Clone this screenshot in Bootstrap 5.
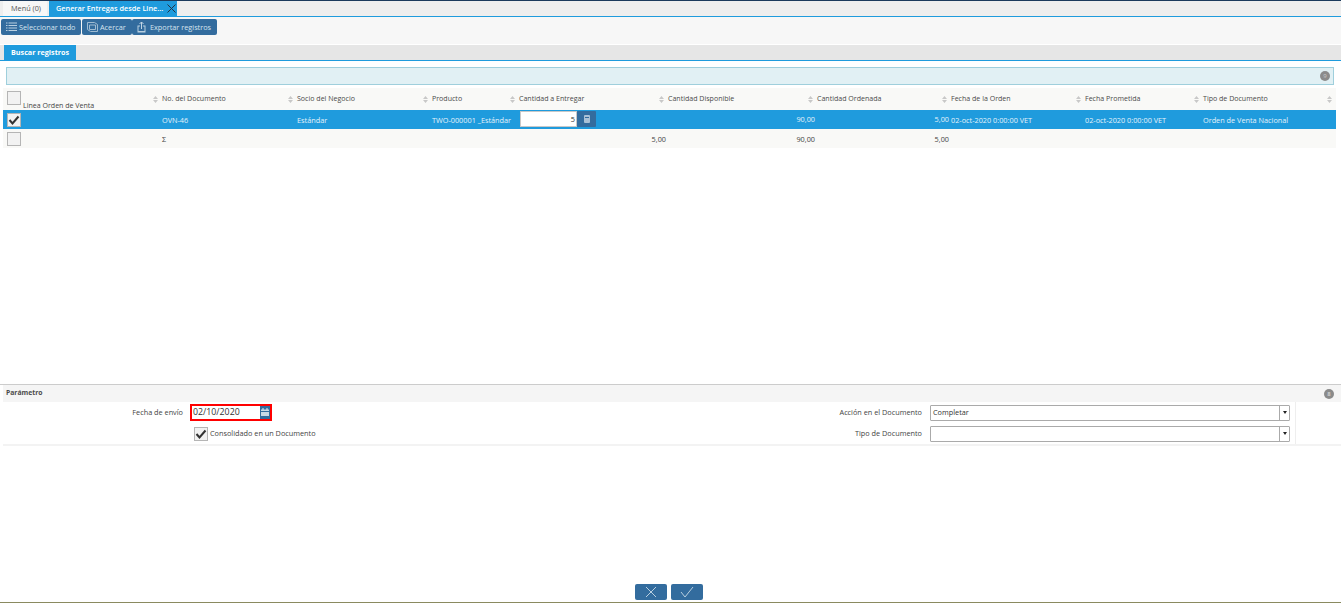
<!DOCTYPE html>
<html lang="es">
<head>
<meta charset="UTF-8">
<title>Generar Entregas desde Linea</title>
<link href="https://cdn.jsdelivr.net/npm/bootstrap@5.3.0/dist/css/bootstrap.min.css" rel="stylesheet">
<style>
    html, body { height: 100%; overflow: hidden; }
    body { background: #fff; font-family: "Open Sans", "Noto Sans", sans-serif; font-size: 7.3px; color: #444; line-height: 1.2; }
    .page-wrap { height: 603px; border-top: 1px solid #1b3a5c; }

    .tab-bar { height: 15px; background: #eee; padding-left: 3px; gap: 2px; }
    .tab-item { width: 44px; height: 15px; padding: 0 0 0 8px; background: #f7f7f7; color: #555; white-space: nowrap; }
    .tab-item.on { background: #1f9bdd; color: #fff; font-weight: 600; width: 128px; padding: 0 0 0 7px; justify-content: space-between; }
    .blue-line { height: 1px; flex: none; background: #1f9bdd; }

    .tool-bar { height: 27px; background: #f7f7f7; padding: 2px 0 0 1px; align-items: flex-start; }
    .tool-btn { height: 16px; background: #336c9e; color: #d6e4ef; border: 0; border-radius: 2px; padding: 0 0 0 5px; font-size: 7.3px; gap: 2px; white-space: nowrap; }
    .tool-btn.first { width: 80px; margin-right: 1px; }
    .tool-btn.second { width: 50px; gap: 2px; }
    .tool-btn.third { width: 85px; gap: 4px; }

    .sub-tabs { height: 15px; background: #e6e6e6; padding-left: 4px; margin-top: 1px; }
    .sub-tab { width: 72px; height: 15px; background: #1f9bdd; color: #fff; font-weight: 700; font-size: 7.2px; padding-left: 7px; white-space: nowrap; }

    .search-bar { height: 18px; margin: 6px 7px 3px 6px; background: #e1f0f4; border: 1px solid #9fcfdc; padding-right: 3px; }
    .gray-dot { width: 10px; height: 10px; border-radius: 50%; background: #8b8b8b; color: #ccc; font-size: 6px; line-height: 10px; text-align: center; }

    .grid-area { margin: 0 5px 0 3px; background: #f9f9f7; }
    .head-row { display: grid; grid-template-columns: 150px 135px 135px 87px 149px 149px 134px 134px 118px 1fr; height: 22px; font-size: 7.05px; }
    .body-row { display: grid; grid-template-columns: 159px 135px 135px 87px 149px 149px 134px 134px 118px 1fr; height: 19px; align-items: center; }
    .head-cell { padding-top: 6px; gap: 4px; white-space: nowrap; color: #4a4a4a; }
    .sort-mark { width: 5px; flex: none; margin-top: 2px; }
    .line-head { padding: 3px 0 0 4px; gap: 2px; white-space: nowrap; }
    .line-head span:last-child { margin-top: 10px; }
    .box-check { width: 14px; height: 14px; background: #f2f2f2; border: 1px solid #b5b5b5; display: block; flex: none; }
    .box-check svg { display: block; }
    .body-row.picked { background: #1f9bdd; color: #e4f2fb; }
    .first-cell { padding-left: 4px; }
    .num-cell { text-align: right; padding-right: 2px; padding-top: 1px; }
    .num-cell.raised { padding-top: 0; margin-top: -1px; }
    .plain-cell { white-space: nowrap; padding-top: 1px; }

    .qty-input { width: 57px; height: 16px; background: #fff; border: 1px solid #c8c8c8; text-align: right; padding-right: 1px; color: #333; line-height: 14px; margin: -2px 0 0 1px; }
    .qty-btn { width: 19px; height: 16px; background: #336c9e; border-radius: 1px; margin-top: -2px; }

    .param-wrap { border-top: 1px solid #ccc; margin-top: 236px; flex: none; }
    .param-head { height: 17px; background: #f5f5f5; margin-left: 3px; padding: 0 7px 0 3px; font-weight: 700; font-size: 6.8px; color: #4a4a4a; }
    .param-form { height: 44px; margin-left: 3px; border-bottom: 2px solid #f3f3f3; }
    .left-part { width: 790px; }
    .right-part { width: 503px; border-right: 1px solid #eee; }
    .param-line { height: 21px; }
    .param-label { white-space: nowrap; text-align: right; color: #444; }
    .left-part .param-label { width: 180px; }
    .right-part .param-label { width: 129px; }
    .date-box { width: 82px; height: 17px; border: 2px solid #f00; margin-left: 7px; padding-left: 1px; font-size: 8.8px; color: #333; line-height: 13px; background: #fff; }
    .cal-btn { width: 10px; height: 13px; background: #336c9e; }
    .combo-box { width: 360px; height: 16px; border: 1px solid #aaa; border-radius: 1px; margin-left: 8px; background: #fff; padding-left: 2px; color: #333; }
    .combo-arrow { width: 10px; height: 14px; border-left: 1px solid #aaa; }
    .combo-arrow i { display: block; border: 2.5px solid transparent; border-top: 3px solid #222; border-bottom: 0; }
    .consol-line { padding-left: 191px; gap: 2px; }

    .foot-btns { height: 16px; margin-top: 138px; padding-right: 4px; gap: 4px; flex: none; }
    .foot-btn { width: 32px; height: 16px; background: #336c9e; border: 0; border-radius: 2px; padding: 0; }
    .foot-line { height: 1px; background: #8a8a60; margin-top: 2px; flex: none; }
</style>
</head>
<body>
<div class="page-wrap d-flex flex-column">

    <div class="tab-bar d-flex">
        <div class="tab-item d-flex align-items-center">Menú (0)</div>
        <div class="tab-item on d-flex align-items-center">
            <span>Generar Entregas desde Line...</span>
            <svg width="11" height="11" viewBox="0 0 11 11"><path d="M1.500 1.500l8 8M9.500 1.500l-8 8" stroke="#234" stroke-width="1" fill="none"/></svg>
        </div>
    </div>
    <div class="blue-line"></div>

    <div class="tool-bar d-flex">
        <button class="tool-btn first d-flex align-items-center">
            <svg width="11" height="10" viewBox="0 0 11 10"><path d="M0 1h1.500M0 3.500h1.500M0 6h1.500M0 8.500h1.500M2.500 1H11M2.500 3.500H11M2.500 6H11M2.500 8.500H11" stroke="#b9cfe0" fill="none"/></svg>
            Seleccionar todo
        </button>
        <button class="tool-btn second d-flex align-items-center">
            <svg width="11" height="10" viewBox="0 0 11 10"><path d="M.5.500h7l3 2v7h-7l-3-2zM2.500 3h6v4.500h-6z" stroke="#9fbbd2" fill="none"/></svg>
            Acercar
        </button>
        <button class="tool-btn third d-flex align-items-center">
            <svg width="9" height="12" viewBox="0 0 9 12"><path d="M4.500 8V1M2.500 3l2-2 2 2" stroke="#c3d6e5" fill="none"/><path d="M.5 4.500h2.500v1H1.500v4.500h6V5.500H6v-1h2.500v7h-8z" fill="#b9cfe0"/></svg>
            Exportar registros
        </button>
    </div>

    <div class="sub-tabs d-flex">
        <div class="sub-tab d-flex align-items-center">Buscar registros</div>
    </div>
    <div class="blue-line"></div>

    <div class="search-bar d-flex align-items-center justify-content-end">
        <div class="gray-dot">9</div>
    </div>

    <div class="grid-area">
        <div class="head-row">
            <div class="line-head d-flex">
                <span class="box-check"></span>
                <span>Linea Orden de Venta</span>
            </div>
            <div class="head-cell d-flex"><svg class="sort-mark" height="7" viewBox="0 0 5 7"><path d="M2.500 0l2.500 3H0zM2.500 7L0 4h5z" fill="#c8c8c8"/></svg>No. del Documento</div>
            <div class="head-cell d-flex"><svg class="sort-mark" height="7" viewBox="0 0 5 7"><path d="M2.500 0l2.500 3H0zM2.500 7L0 4h5z" fill="#c8c8c8"/></svg>Socio del Negocio</div>
            <div class="head-cell d-flex"><svg class="sort-mark" height="7" viewBox="0 0 5 7"><path d="M2.500 0l2.500 3H0zM2.500 7L0 4h5z" fill="#c8c8c8"/></svg>Producto</div>
            <div class="head-cell d-flex"><svg class="sort-mark" height="7" viewBox="0 0 5 7"><path d="M2.500 0l2.500 3H0zM2.500 7L0 4h5z" fill="#c8c8c8"/></svg>Cantidad a Entregar</div>
            <div class="head-cell d-flex"><svg class="sort-mark" height="7" viewBox="0 0 5 7"><path d="M2.500 0l2.500 3H0zM2.500 7L0 4h5z" fill="#c8c8c8"/></svg>Cantidad Disponible</div>
            <div class="head-cell d-flex"><svg class="sort-mark" height="7" viewBox="0 0 5 7"><path d="M2.500 0l2.500 3H0zM2.500 7L0 4h5z" fill="#c8c8c8"/></svg>Cantidad Ordenada</div>
            <div class="head-cell d-flex"><svg class="sort-mark" height="7" viewBox="0 0 5 7"><path d="M2.500 0l2.500 3H0zM2.500 7L0 4h5z" fill="#c8c8c8"/></svg>Fecha de la Orden</div>
            <div class="head-cell d-flex"><svg class="sort-mark" height="7" viewBox="0 0 5 7"><path d="M2.500 0l2.500 3H0zM2.500 7L0 4h5z" fill="#c8c8c8"/></svg>Fecha Prometida</div>
            <div class="head-cell d-flex justify-content-between pe-1">
                <span class="d-flex gap-1"><svg class="sort-mark" height="7" viewBox="0 0 5 7"><path d="M2.500 0l2.500 3H0zM2.500 7L0 4h5z" fill="#c8c8c8"/></svg>Tipo de Documento</span>
                <svg class="sort-mark" height="7" viewBox="0 0 5 7"><path d="M2.500 0l2.500 3H0zM2.500 7L0 4h5z" fill="#c8c8c8"/></svg>
            </div>
        </div>

        <div class="body-row picked">
            <div class="first-cell"><span class="box-check"><svg width="12" height="12" viewBox="0 0 12 12"><path d="M1.500 6l3 3.500 6-7" stroke="#333" stroke-width="2" fill="none"/></svg></span></div>
            <div class="plain-cell">OVN-46</div>
            <div class="plain-cell">Estándar</div>
            <div class="plain-cell">TWO-000001 _Estándar</div>
            <div class="d-flex">
                <div class="qty-input">5</div>
                <div class="qty-btn d-flex align-items-center justify-content-center">
                    <svg width="6" height="8" viewBox="0 0 6 8"><rect width="6" height="8" rx="1" fill="#a9c1d6"/><path d="M1 2.500h4" stroke="#336c9e"/></svg>
                </div>
            </div>
            <div class="num-cell raised">90,00</div>
            <div class="num-cell raised">5,00</div>
            <div class="plain-cell">02-oct-2020 0:00:00 VET</div>
            <div class="plain-cell">02-oct-2020 0:00:00 VET</div>
            <div class="plain-cell">Orden de Venta Nacional</div>
        </div>

        <div class="body-row">
            <div class="first-cell"><span class="box-check"></span></div>
            <div class="plain-cell">Σ</div>
            <div></div>
            <div></div>
            <div class="num-cell">5,00</div>
            <div class="num-cell">90,00</div>
            <div class="num-cell">5,00</div>
            <div></div>
            <div></div>
            <div></div>
        </div>
    </div>

    <div class="param-wrap">
        <div class="param-head d-flex align-items-center justify-content-between">
            <span>Parámetro</span>
            <div class="gray-dot">8</div>
        </div>
        <div class="param-form d-flex">
            <div class="left-part">
                <div class="param-line d-flex align-items-center">
                    <div class="param-label">Fecha de envío</div>
                    <div class="date-box d-flex align-items-center justify-content-between">
                        <span>02/10/2020</span>
                        <span class="cal-btn d-flex align-items-center justify-content-center">
                            <svg width="8" height="9" viewBox="0 0 8 9"><path d="M0 1.500h8v6.500H0z" fill="#c9d9e6"/><path d="M0 3.500h8" stroke="#336c9e"/><path d="M2 0v2M6 0v2" stroke="#e6eef5"/></svg>
                        </span>
                    </div>
                </div>
                <div class="param-line consol-line d-flex align-items-center">
                    <span class="box-check"><svg width="12" height="12" viewBox="0 0 12 12"><path d="M1.500 6l3 3.500 6-7" stroke="#333" stroke-width="2" fill="none"/></svg></span>
                    <span>Consolidado en un Documento</span>
                </div>
            </div>
            <div class="right-part">
                <div class="param-line d-flex align-items-center">
                    <div class="param-label">Acción en el Documento</div>
                    <div class="combo-box d-flex align-items-center justify-content-between">
                        <span>Completar</span>
                        <span class="combo-arrow d-flex align-items-center justify-content-center"><i></i></span>
                    </div>
                </div>
                <div class="param-line d-flex align-items-center">
                    <div class="param-label">Tipo de Documento</div>
                    <div class="combo-box d-flex align-items-center justify-content-end">
                        <span class="combo-arrow d-flex align-items-center justify-content-center"><i></i></span>
                    </div>
                </div>
            </div>
        </div>
    </div>

    <div class="foot-btns d-flex justify-content-center">
        <button class="foot-btn d-flex align-items-center justify-content-center">
            <svg width="12" height="12" viewBox="0 0 12 12"><path d="M1 1l10 10M11 1L1 11" stroke="#b9cfe0" fill="none"/></svg>
        </button>
        <button class="foot-btn d-flex align-items-center justify-content-center">
            <svg width="14" height="12" viewBox="0 0 14 12"><path d="M1 6l4 5 8-10" stroke="#b9cfe0" fill="none"/></svg>
        </button>
    </div>
    <div class="foot-line"></div>
</div>
<script src="https://cdn.jsdelivr.net/npm/bootstrap@5.3.0/dist/js/bootstrap.bundle.min.js"></script>
</body>
</html>
